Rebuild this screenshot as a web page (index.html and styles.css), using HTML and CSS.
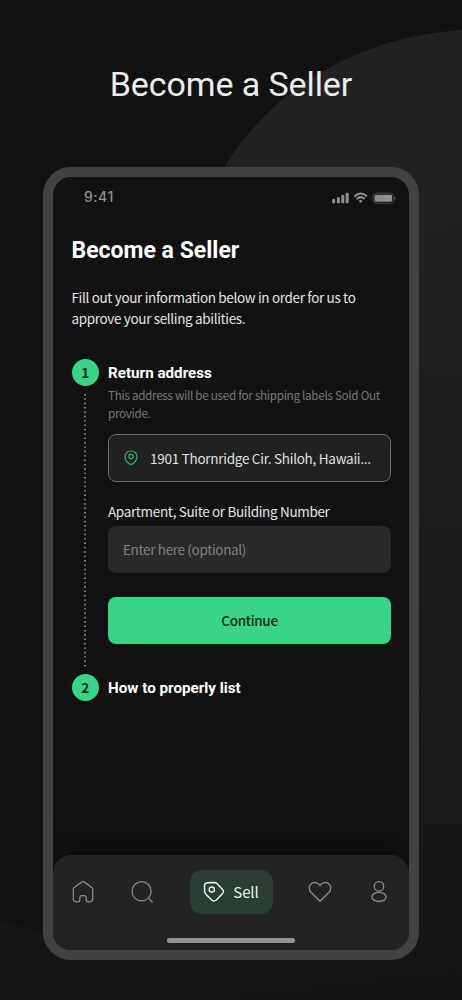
FILE: index.html
```html
<!DOCTYPE html>
<html lang="en">

<head>
    <title>Become a Seller</title>
    <meta charset="utf-8">
    <meta name="viewport" content="width=device-width, initial-scale=1">
    <link rel="stylesheet" href="styles.css">
</head>

<body>
    <svg class="backdrop" viewBox="0 0 462 1000" aria-hidden="true">
        <defs>
            <linearGradient id="shade" gradientUnits="userSpaceOnUse" x1="300" y1="150" x2="400" y2="1000">
                <stop offset="0" stop-color="#222222" />
                <stop offset="1" stop-color="#151515" />
            </linearGradient>
        </defs>
        <path fill="url(#shade)" d="M462 30C365 36 275 84 225 166L100 700L43 932Q20 928 0 921V1000H462Z" />
    </svg>

    <div class="headline">Become a Seller</div>

    <div class="phone">
        <div class="status">
            <span class="clock">9:41</span>
            <svg width="64" height="12" viewBox="0 0 64 12" fill="#8f8f8f">
                <rect x="0.2" y="7" width="3" height="4.2" rx="0.8" />
                <rect x="4.9" y="5.2" width="3" height="6" rx="0.8" />
                <rect x="9.3" y="3" width="3" height="8.2" rx="0.8" />
                <rect x="13.7" y="0.8" width="3" height="10.4" rx="0.8" />
                <g fill="none" stroke="#8f8f8f" stroke-width="2">
                    <path d="M22.3 4.4Q28.6 -1.4 35 4.4" />
                    <path d="M24.6 6.9Q28.6 3.3 32.7 6.9" />
                </g>
                <path d="M26.6 8.7Q28.6 7.2 30.7 8.7L28.6 11Z" />
                <rect x="41" y="1.2" width="20.4" height="10" rx="2.8" fill="none" stroke="#484848" />
                <rect x="42.6" y="2.7" width="17.4" height="7" rx="1.4" />
                <path d="M62.5 4.8Q63.6 5.2 63.6 6.2T62.5 7.7Z" fill="#555" />
            </svg>
        </div>

        <div class="content">
            <h1>Become a Seller</h1>
            <p class="intro">Fill out your information below in order for us to<br>approve your selling abilities.</p>

            <div class="step">
                <div class="rail">
                    <div class="badge">1</div>
                    <svg class="dots" width="2" height="275" viewBox="0 0 2 275">
                        <path d="M1 1V275" />
                    </svg>
                </div>
                <div class="step-body">
                    <h2>Return address</h2>
                    <p class="hint">This address will be used for shipping labels Sold Out<br>provide.</p>
                    <div class="field field-active">
                        <svg width="14" height="16" viewBox="0 0 14 16" fill="none" stroke="#2fb873" stroke-width="1.2">
                            <path d="M7 1C3.4 1 1 3.4 1 6.7C1 9.6 3 12.2 5.3 13.8Q7 15.1 8.7 13.8C11 12.2 13 9.6 13 6.7C13 3.4 10.6 1 7 1Z" />
                            <circle cx="7" cy="6.5" r="2.2" />
                        </svg>
                        <span class="address">1901 Thornridge Cir. Shiloh, Hawaii...</span>
                    </div>
                    <div class="label">Apartment, Suite or Building Number</div>
                    <div class="field"><span class="placeholder">Enter here (optional)</span></div>
                    <div class="button"><span>Continue</span></div>
                </div>
            </div>

            <div class="step">
                <div class="rail">
                    <div class="badge">2</div>
                </div>
                <div class="step-body">
                    <h2>How to properly list</h2>
                </div>
            </div>
        </div>

        <div class="nav">
            <div class="tabs">
                <svg class="tab" width="24" height="24" viewBox="0 0 24 24">
                    <path d="M2.3 9.4Q2.3 8.2 3.2 7.5L10.6 2.1Q12 1.2 13.4 2.1L20.8 7.5Q21.7 8.2 21.7 9.4V18.6Q21.7 21.8 18.8 21.8H17.2Q15.2 21.8 15.2 19.7V17.6Q15.2 15.6 13.2 15.6H10.8Q8.8 15.6 8.8 17.6V19.7Q8.8 21.8 6.8 21.8H5.2Q2.3 21.8 2.3 18.6Z" />
                </svg>
                <svg class="tab" width="24" height="24" viewBox="0 0 24 24">
                    <circle cx="11.6" cy="11.3" r="9.6" />
                    <path d="M19.4 19.2L22.2 22" />
                </svg>
                <div class="sell">
                    <svg width="22" height="22" viewBox="0 0 22 22" fill="none" stroke="#f4f4f4" stroke-width="1.4" stroke-linejoin="round">
                        <path d="M4.4 1.8L11.3 1.5Q13 1.5 14.2 2.7L19.7 8.7Q21.2 10.5 19.7 12.4L13.3 19Q11 20.9 8.7 19L3.1 13.4Q1.7 12 1.6 10L1.5 4.6Q1.8 2.2 4.4 1.8Z" />
                        <circle cx="8.8" cy="8.6" r="2.6" />
                    </svg>
                    <span>Sell</span>
                </div>
                <svg class="tab" width="24" height="24" viewBox="0 0 24 24">
                    <path d="M12 21.2L3 12.2C0.6 9.8 0.7 6 3 3.9C5.7 1.7 9.8 2.2 12 5.6C14.2 2.2 18.3 1.7 21 3.9C23.3 6 23.4 9.8 21 12.2Z" />
                </svg>
                <svg class="tab" width="24" height="24" viewBox="0 0 24 24">
                    <circle cx="12" cy="6.4" r="4.7" />
                    <ellipse cx="12" cy="16.9" rx="7" ry="4.6" />
                </svg>
            </div>
            <div class="home-bar"></div>
        </div>
    </div>
</body>

</html>
```
FILE: styles.css
```css
* {
    box-sizing: border-box;
}

body {
    margin: 0;
    width: 462px;
    height: 1000px;
    overflow: hidden;
    background-color: #121212;
    color: #ffffff;
    font-family: "Noto Sans CJK JP", "Noto Sans", sans-serif;
    letter-spacing: -0.34px;
    display: flex;
    flex-direction: column;
    align-items: center;
}

.backdrop {
    position: absolute;
    top: 0;
    left: 0;
    width: 462px;
    height: 1000px;
    z-index: -1;
}

.headline {
    height: 167px;
    padding-top: 63px;
    font-family: Roboto, sans-serif;
    font-size: 34px;
    font-weight: 400;
    letter-spacing: -0.1px;
    line-height: 42px;
    color: #ececec;
    white-space: nowrap;
}

.phone {
    width: 376px;
    height: 793px;
    border: 10px solid #424242;
    border-radius: 28px;
    background-color: #121212;
    overflow: hidden;
    display: flex;
    flex-direction: column;
}

.status {
    height: 56px;
    padding: 11px 13px 0 31px;
    display: flex;
    justify-content: space-between;
}

.clock {
    font-family: Inter, sans-serif;
    font-size: 14px;
    font-weight: 500;
    letter-spacing: 0.5px;
    line-height: 17px;
    color: #8f8f8f;
}

.status svg {
    margin-top: 4px;
}

.content {
    flex-grow: 1;
    padding: 0 18px 0 18.5px;
}

h1,
h2 {
    margin: 0;
    font-family: Roboto, sans-serif;
    font-weight: 700;
    letter-spacing: 0;
    white-space: nowrap;
}

h1 {
    font-size: 23px;
    line-height: 36px;
}

h2 {
    font-size: 15.2px;
    line-height: 28px;
}

.intro {
    margin: 18px 0 30px;
    font-size: 13.5px;
    line-height: 21px;
    color: #e4e4e4;
    white-space: nowrap;
}

.step {
    display: flex;
    gap: 9.5px;
}

.step-body {
    flex-grow: 1;
    min-width: 0;
}

.rail {
    width: 27px;
    display: flex;
    flex-direction: column;
    align-items: center;
}

.badge {
    width: 27px;
    height: 27px;
    border-radius: 50%;
    background-color: #38d586;
    color: #10291c;
    font-size: 13.5px;
    font-weight: 700;
    line-height: 27px;
    text-align: center;
}

.dots {
    margin-top: 7px;
    stroke: #b4b4b4;
    stroke-width: 1.4;
    stroke-dasharray: 1.4 2.97;
}

.hint {
    margin: -1px 0 12px;
    font-size: 11.7px;
    letter-spacing: -0.3px;
    line-height: 18px;
    color: #777777;
    white-space: nowrap;
}

.field {
    height: 47.5px;
    padding: 0 15px;
    border-radius: 8px;
    background-color: #292929;
    display: flex;
    align-items: center;
    font-size: 13.5px;
    white-space: nowrap;
}

.field-active {
    border: 1px solid #6c6c6c;
    background-color: #212121;
}

.address {
    margin-left: 12px;
    letter-spacing: -0.27px;
    color: #e0e0e0;
}

.placeholder {
    color: #808080;
}

.label {
    margin: 19px 0 5px;
    font-size: 13.5px;
    line-height: 20px;
    color: #e4e4e4;
    white-space: nowrap;
}

.button {
    height: 47.5px;
    margin: 23.5px 0 30px;
    border-radius: 8px;
    background-color: #38d586;
    color: #10291c;
    display: flex;
    align-items: center;
    justify-content: center;
    font-size: 13.5px;
    font-weight: 500;
}

.nav {
    height: 95px;
    border-radius: 18px 18px 0 0;
    background-color: #232323;
    box-shadow: 0 -8px 28px rgba(0, 0, 0, 0.4);
    display: flex;
    flex-direction: column;
    align-items: center;
}

.tabs {
    width: 100%;
    padding: 15px 18px 0;
    display: flex;
    align-items: center;
    justify-content: space-between;
}

.tab {
    fill: none;
    stroke: #89888c;
    stroke-width: 1.3;
    stroke-linecap: round;
    stroke-linejoin: round;
}

.sell {
    width: 83px;
    height: 44px;
    border-radius: 12px;
    background-color: #283f32;
    display: flex;
    align-items: center;
    justify-content: center;
    gap: 8px;
    font-size: 15px;
    letter-spacing: -0.1px;
    line-height: 22px;
    color: #eeeeee;
}

.home-bar {
    width: 128px;
    height: 5px;
    margin-top: 23.5px;
    border-radius: 3px;
    background-color: #929292;
}
```
